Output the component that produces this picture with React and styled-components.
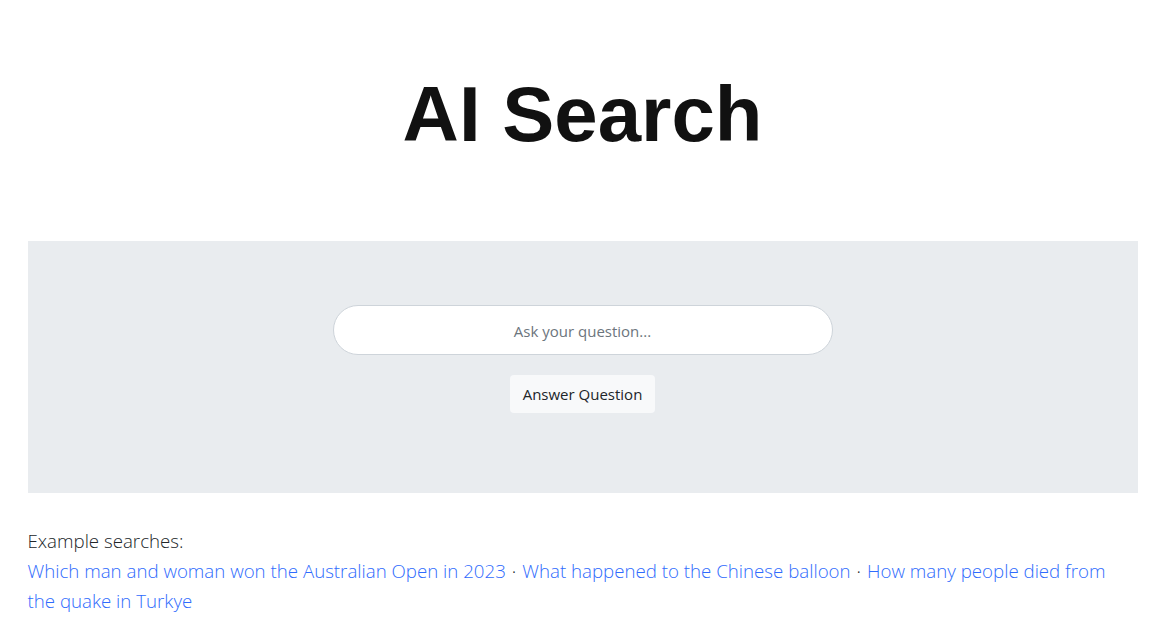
import React from 'react';
import styled, { createGlobalStyle } from 'styled-components';

const GlobalStyle = createGlobalStyle`
  body {
    margin: 0;
    background: #fff;
    color: #212529;
    font-family: 'Open Sans', 'Noto Sans', sans-serif;
  }
`;

const Container = styled.div`
  max-width: 1110px;
  margin: 0 auto;
  padding: 0 15px;
`;

const Title = styled.h1`
  margin: 66px 0 79px;
  text-align: center;
  font-family: 'Liberation Sans', Arial, sans-serif;
  font-size: 78px;
  font-weight: 700;
  line-height: 96px;
  color: #111;
`;

const SearchPanel = styled.form`
  display: flex;
  flex-direction: column;
  align-items: center;
  gap: 20px;
  padding: 64px 32px 80px;
  margin-bottom: 32px;
  background: #e9ecef;
`;

const QuestionInput = styled.input`
  box-sizing: border-box;
  width: 500px;
  height: 50px;
  padding-top: 2px;
  border: 1px solid #ced4da;
  border-radius: 25px;
  background: #fff;
  text-align: center;
  font-family: inherit;
  font-size: 15px;
  color: #212529;
  outline: none;
  &::placeholder {
    color: #6c757d;
  }
`;

const AnswerButton = styled.button`
  height: 38px;
  padding: 0 13px;
  border: none;
  border-radius: 4px;
  background: #f8f9fa;
  font-family: inherit;
  font-size: 15px;
  color: #212529;
  cursor: pointer;
`;

const Examples = styled.div`
  padding-top: 1px;
  font-size: 18.7px;
  font-weight: 300;
  line-height: 30px;
  color: #212529;
`;

const ExampleLink = styled.a`
  color: #2f6bfd;
  text-decoration: none;
`;

const Dot = styled.span`
  margin: 0 6px;
`;

const examples = [
  'Which man and woman won the Australian Open in 2023',
  'What happened to the Chinese balloon',
  'How many people died from the quake in Turkye',
];

function App() {
  return (
    <Container>
      <GlobalStyle />
      <Title>AI Search</Title>
      <SearchPanel onSubmit={(e) => e.preventDefault()}>
        <QuestionInput placeholder="Ask your question..." />
        <AnswerButton type="submit">Answer Question</AnswerButton>
      </SearchPanel>
      <Examples>
        <div>Example searches:</div>
        <div>
          {examples.map((q, i) => (
            <React.Fragment key={q}>
              {i > 0 && <Dot>·</Dot>}
              <ExampleLink href="#">{q}</ExampleLink>
            </React.Fragment>
          ))}
        </div>
      </Examples>
    </Container>
  );
}

export default App;
